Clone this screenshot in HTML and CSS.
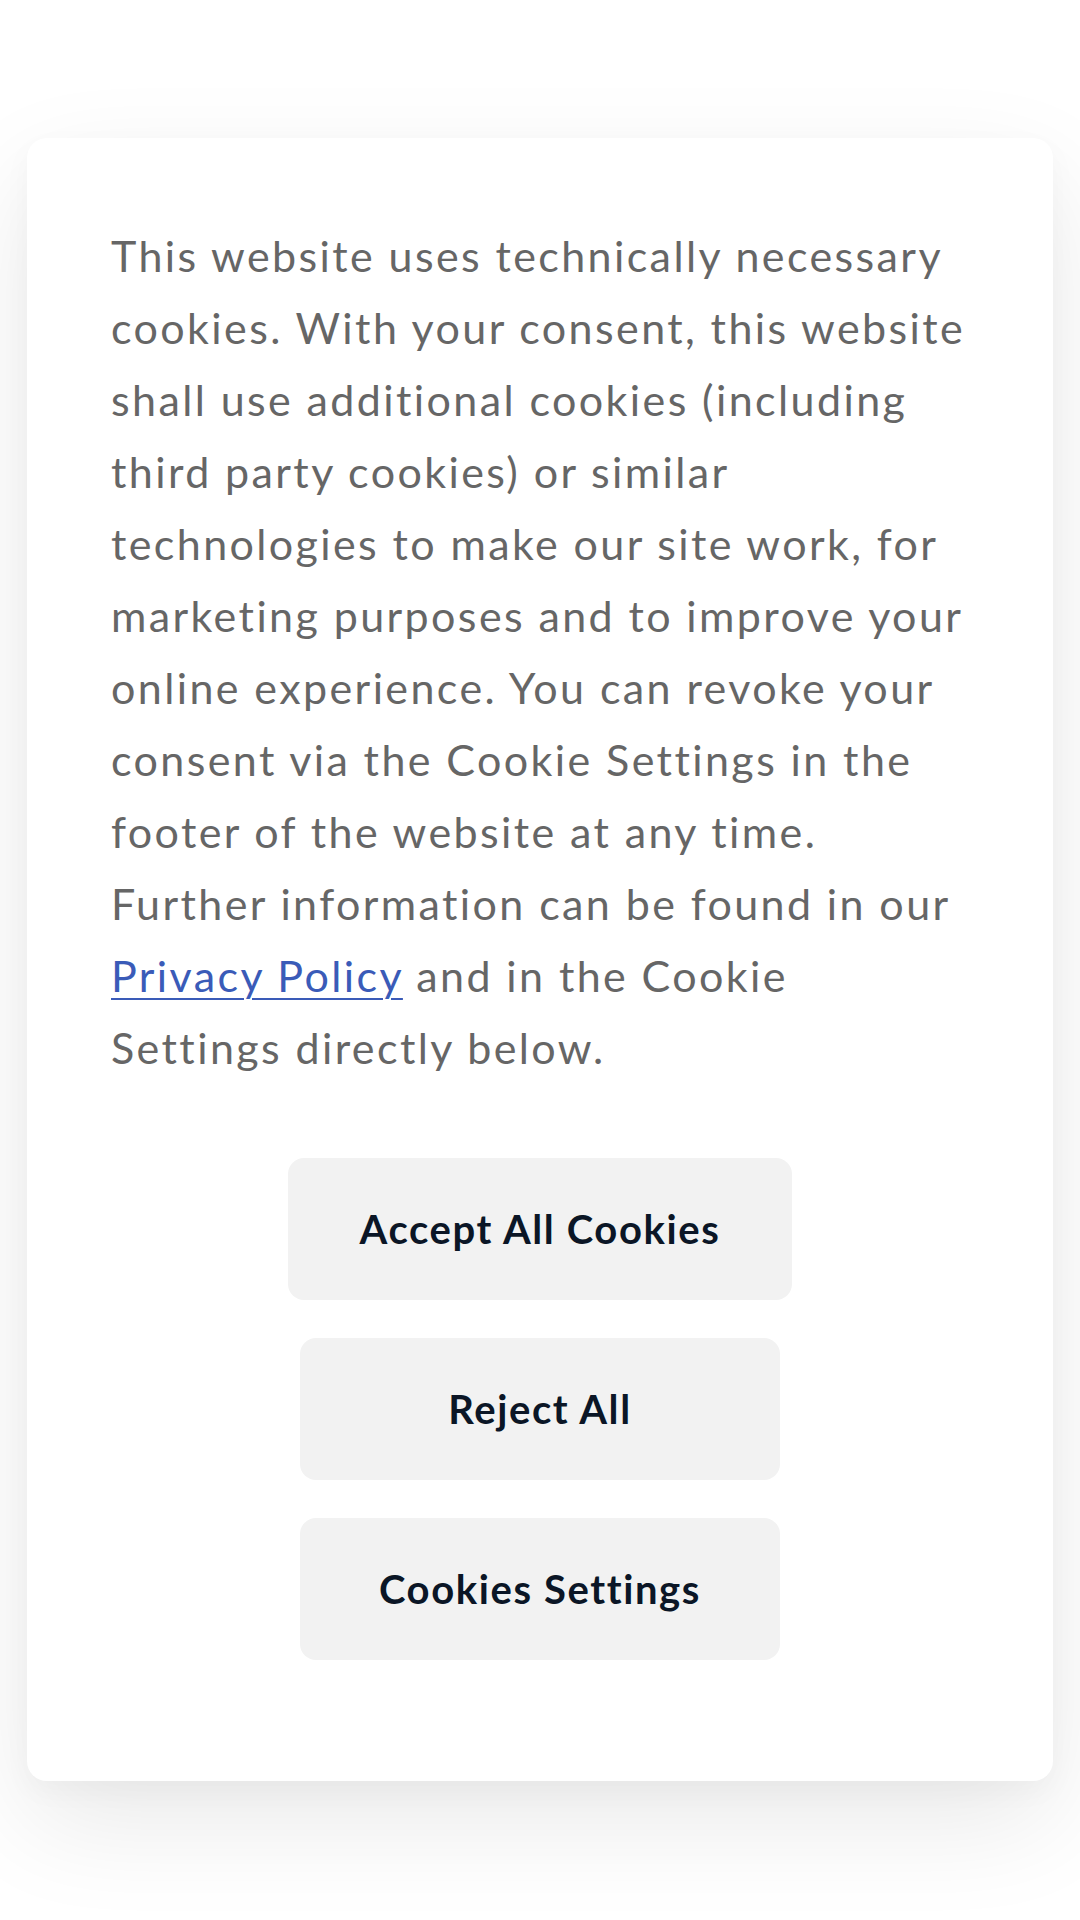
FILE: index.html
```html
<!DOCTYPE html>
<html lang="en">
<head>
<meta charset="utf-8">
<title>Cookie consent</title>
<link rel="stylesheet" href="styles.css">
</head>
<body>
<div class="page">
  <div class="card">
    <p class="text">This website uses technically necessary cookies. With your consent, this website shall use additional cookies (including third party cookies) or similar technologies to make our site work, for marketing purposes and to improve your online experience. You can revoke your consent via the Cookie Settings in the footer of the website at any time. Further information can be found in our <a href="#" class="link">Privacy Policy</a> and in the Cookie Settings directly below.</p>
    <div class="actions">
      <button class="btn">Accept All Cookies</button>
      <button class="btn">Reject All</button>
      <button class="btn">Cookies Settings</button>
    </div>
  </div>
</div>
</body>
</html>
```
FILE: styles.css
```css
html, body {
  margin: 0;
  padding: 0;
  background: #ffffff;
}
body {
  width: 1080px;
  height: 1920px;
  overflow: hidden;
  font-family: Lato, "Liberation Sans", sans-serif;
}
.page {
  padding: 138px 27px 0 27px;
}
.card {
  background: #ffffff;
  border-radius: 20px;
  box-shadow: 0 40px 110px rgba(0, 0, 0, 0.09), 0 10px 30px rgba(0, 0, 0, 0.03);
  padding: 82px 84px 121px 84px;
}
.text {
  margin: 0;
  font-size: 43px;
  line-height: 72px;
  letter-spacing: 2.4px;
  color: #666666;
}
.link {
  color: #3a5bb8;
  text-decoration: underline;
  text-underline-offset: 6px;
  text-decoration-thickness: 2px;
}
.actions {
  margin-top: 74px;
  display: flex;
  flex-direction: column;
  align-items: center;
  gap: 38px;
}
.btn {
  min-width: 480px;
  height: 142px;
  padding: 0 72px;
  border: none;
  border-radius: 16px;
  background: #f2f2f2;
  color: #0b1626;
  font-family: Lato, "Liberation Sans", sans-serif;
  font-weight: 700;
  font-size: 40px;
  letter-spacing: 1.6px;
}
```
